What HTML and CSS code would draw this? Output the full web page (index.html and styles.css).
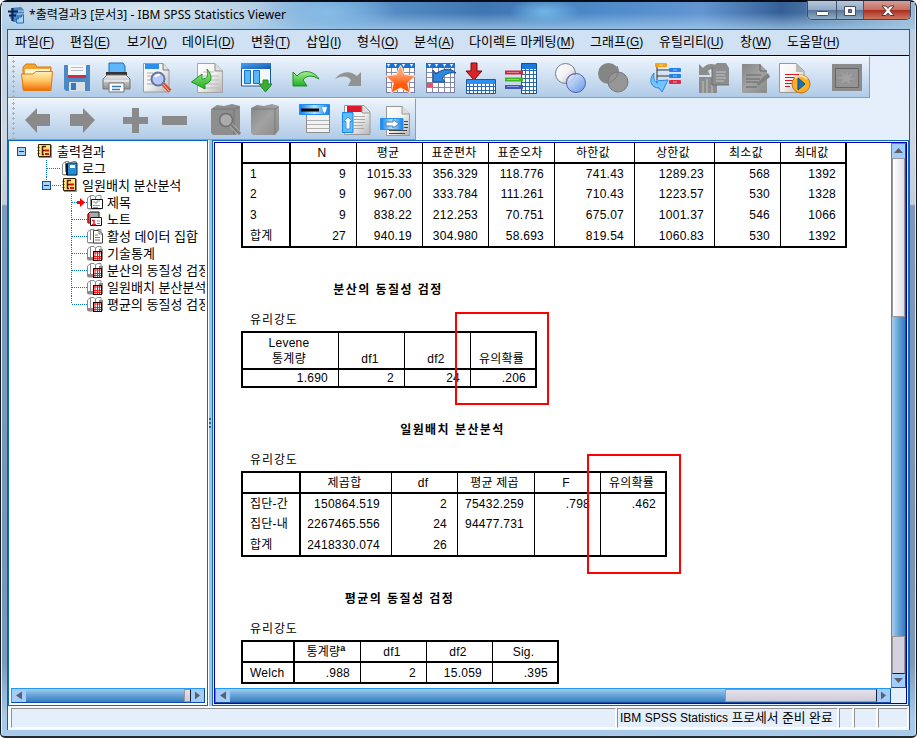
FILE: index.html
```html
<!DOCTYPE html>
<html lang="ko">
<head>
<meta charset="utf-8">
<title>IBM SPSS Statistics Viewer</title>
<link rel="stylesheet" href="styles.css">
</head>
<body>
<svg width="0" height="0" class="defs">
<defs>
<linearGradient id="orange" x1="0" y1="0" x2="0" y2="1"><stop offset="0" stop-color="#fff0c0"/><stop offset=".5" stop-color="#ffc45c"/><stop offset="1" stop-color="#f06a08"/></linearGradient>
<linearGradient id="blue" x1="0" y1="0" x2="1" y2="1"><stop offset="0" stop-color="#4ba3f0"/><stop offset="1" stop-color="#1257b0"/></linearGradient>
<linearGradient id="paper" x1="0" y1="0" x2="1" y2="1"><stop offset="0" stop-color="#fff"/><stop offset=".5" stop-color="#f2f2f2"/><stop offset="1" stop-color="#b4b4b4"/></linearGradient>
<linearGradient id="green" x1="0" y1="0" x2="0" y2="1"><stop offset="0" stop-color="#a6f08a"/><stop offset="1" stop-color="#22ac28"/></linearGradient>
<linearGradient id="gray" x1="0" y1="0" x2="1" y2="1"><stop offset="0" stop-color="#858585"/><stop offset=".5" stop-color="#a2a2a2"/><stop offset="1" stop-color="#8a8a8a"/></linearGradient>
<linearGradient id="lens" x1="0" y1="0" x2="1" y2="1"><stop offset="0" stop-color="#f4f8ff"/><stop offset="1" stop-color="#4f86ee"/></linearGradient>
<linearGradient id="sky" x1="0" y1="0" x2="1" y2="0"><stop offset="0" stop-color="#0c7cf0"/><stop offset=".5" stop-color="#b4e4ff"/><stop offset="1" stop-color="#0c7cf0"/></linearGradient>
<linearGradient id="star" x1="0" y1="0" x2="0" y2="1"><stop offset=".3" stop-color="#ffa070"/><stop offset=".7" stop-color="#ff5a0c"/></linearGradient>
<linearGradient id="steel" x1="0" y1="0" x2="0" y2="1"><stop offset="0" stop-color="#eee"/><stop offset="1" stop-color="#909090"/></linearGradient>
<pattern id="cells" x="2" y="6" width="6" height="5" patternUnits="userSpaceOnUse"><rect width="6" height="5" fill="#fff"/><path d="M5.5 0V5M0 4.5H6" stroke="#858caa"/></pattern>
<pattern id="bcells" x="1" y="1" width="4" height="4" patternUnits="userSpaceOnUse"><rect width="4" height="4" fill="#fff"/><path d="M3.5 0V4M0 3.5H4" stroke="#2868b4"/></pattern>
<g id="logbook"><path d="M.5 1.5H12.5V13.5H.5Z" fill="#ffe27c" stroke="#302408"/><path d="M13.5 2V14.5H1" fill="none" stroke="#8c8c8c"/><path d="M-.5 4.500h2M-.5 7.500h2M-.5 10.500h2" stroke="#302408"/><path d="M4 3.500H8M4.500 3.500V11.500H6M4.500 7.500H7" fill="none" stroke="#5a1800" stroke-width="1.500"/><path d="M7 7.500h4M7 11h4" stroke="#f00808" stroke-width="2"/></g>
<g id="book"><path d="M.5 14.500V4L3.500 1.500H7L8.500 3L10.500 1.500H14V15H2Z" fill="#fff" stroke="#8a8a8a"/><path d="M3.500 2V12M8.500 3V14M1 14.500H7" stroke="#8a8a8a"/></g>
<g id="tablebook"><use href="#book"/><path d="M1 12H6V15H1ZM12 4H16V15H12Z" fill="#8a8a8a"/><rect x="6.500" y="6.500" width="8" height="9" fill="#fff" stroke="#200"/><path d="M7 8h7M8 7v8M7 11.500h7M7 13.500h7M10.500 7v8M12.500 7v8" stroke="#f01818"/></g>
<g id="minus"><rect x=".5" y=".5" width="8" height="8" fill="#a9d3fb" stroke="#0f4ba2"/><path d="M2 4.500h5" stroke="#0f3b80"/></g>
</defs>
</svg>

<div class="window">
<header class="title">
  <svg class="app-icon" width="17" height="18" viewBox="0 0 17 18"><path d="M3 2L13 1L16 4V14L14 16H5L2 12Z" fill="#4b86c0"/><path d="M0 5.500h10M1 9.500h7M4.500 2v13" stroke="#09285c" stroke-width="2"/><path d="M10 5h6M9 8h7" stroke="#bcd9f2"/><path d="M8.500 17V13h2V11h3V9h2v8z" fill="#a9d3f5" stroke="#226fb6"/></svg>
  <h1>*출력결과3 [문서3] - IBM SPSS Statistics Viewer</h1>
  <div class="controls">
    <span><svg width="28" height="19"><rect x="8.500" y="10.500" width="12" height="4" rx="1" fill="#fff" stroke="#46515f"/></svg></span>
    <span><svg width="26" height="19"><path d="M7.500 5.500h11v9h-11zM11.500 8.500v3h3v-3z" fill="#fff" stroke="#46515f" fill-rule="evenodd"/></svg></span>
    <span class="close"><svg width="46" height="19"><path d="M18 5h4l2 2.500L26 5h4l-4 4.500 4 5h-4l-2-2.500-2 2.500h-4l4-5z" fill="#fff" stroke="#5c3438"/></svg></span>
  </div>
</header>

<main class="client">
<nav class="menu"><span>파일<i>(<u>F</u>)</i></span><span>편집<i>(<u>E</u>)</i></span><span>보기<i>(<u>V</u>)</i></span><span>데이터<i>(<u>D</u>)</i></span><span>변환<i>(<u>T</u>)</i></span><span>삽입<i>(<u>I</u>)</i></span><span>형식<i>(<u>O</u>)</i></span><span>분석<i>(<u>A</u>)</i></span><span>다이렉트 마케팅<i>(<u>M</u>)</i></span><span>그래프<i>(<u>G</u>)</i></span><span>유틸리티<i>(<u>U</u>)</i></span><span>창<i>(<u>W</u>)</i></span><span>도움말<i>(<u>H</u>)</i></span></nav>

<div class="toolbar primary">
<svg viewBox="0 0 32 32"><path d="M2 27V5L5 2H14L16 5H30V25Z" fill="#f8a42c" stroke="#dc7a10"/><path d="M4 10V7H29V14H4Z" fill="#fff4d4"/><path d="M.5 12H12L15 9.500H31.500L30 28.500H2.500Z" fill="url(#orange)" stroke="#dd7a10"/></svg>
<svg viewBox="0 0 32 32"><path d="M3 3H29V29H5L3 27Z" fill="#4a88c6"/><path d="M7 3H25V16H7Z" fill="#f5f8fa"/><path d="M10 5.500H22M10 8.500H22" stroke="#b4bcc4"/><path d="M7 14.500H25" stroke="#d82848" stroke-width="3"/><path d="M8 20H24V29H8Z" fill="#d8e0e6"/><path d="M10 21H15V28H10Z" fill="#3679bc"/></svg>
<svg viewBox="0 0 32 32"><path d="M9 12V1H23L25 4V12Z" fill="#5eb7fb" stroke="#1b6bc0"/><path d="M6 10H27V17H6Z" fill="#333"/><path d="M3 17L7 13H26L30 17V27H3Z" fill="url(#steel)" stroke="#777"/><path d="M4 19H29" stroke="#fff"/><path d="M9 21H24V30H9Z" fill="#fff" stroke="#6d747c"/><path d="M12 24.500H21M12 27.500H20" stroke="#3c78aa" stroke-width="1.500"/></svg>
<svg viewBox="0 0 32 32"><path d="M2.500 1.500H22L28 8V30H2.500Z" fill="url(#paper)" stroke="#969da4"/><path d="M4 2H18V7H4Z" fill="#2c8fee"/><path d="M22 1.500V8H28" fill="#e4e4e4" stroke="#777"/><path d="M6 11H12M6 14H11M6 18H11M6 22H15" stroke="#aaa"/><path d="M22 22L29 29" stroke="#df4a28" stroke-width="4"/><path d="M22 22L28 29" stroke="#fdc1a6"/><circle cx="17" cy="17" r="6.500" fill="#b4cafc" stroke="#67749e" stroke-width="2"/><path d="M14 15Q16 12 19 13" stroke="#fff" stroke-width="2" fill="none"/></svg>
<svg viewBox="0 0 32 32"><path d="M6.500 1.500H24L31.500 9V30.500H6.500Z" fill="url(#paper)" stroke="#a4a4a4"/><path d="M24 1.500V9H31.500" fill="#ddd" stroke="#8d8d8d"/><path d="M12 10H23M12 14H28M12 18H28M12 22H28M12 26H28" stroke="#bbb"/><path d="M16 7C23 15 20 21 14 22V27L.5 20L11 12V17C16 17 18 14 16 7Z" fill="url(#green)" stroke="#21952a"/></svg>
<svg viewBox="0 0 32 32"><path d="M1.500 1.500H30.500V24H1.500Z" fill="#f4f8fd" stroke="#1c579c"/><path d="M1 1H31V7H1Z" fill="url(#blue)"/><path d="M4.500 8.500H10.500V21.500H4.500ZM13.500 8.500H19.500V21.500H13.500Z" fill="#58b6fc" stroke="#176fc4"/><path d="M23 18H28V22H32L25.500 30L19 22H23Z" fill="#3dac35" stroke="#188d22"/></svg>
<svg viewBox="0 0 32 32"><path d="M4 10L8 14C15 6 26 10 30 17C23 13 18 13 14 18L18 24H4Z" fill="url(#green)" stroke="#1b8c28"/></svg>
<svg viewBox="0 0 32 32"><path d="M29 10L25 14C18 8 9 9 3 17C9 14 15 13 19 18L16 24H29Z" fill="#929292"/></svg>
<svg viewBox="0 0 32 32"><path d="M2 1H31V31H2Z" fill="#7a80a4"/><path d="M2 1H31V6H2Z" fill="#1971d6"/><path d="M3 2h3l-1.500 3zM10 2h3l-1.500 3zM18 2h3l-1.500 3zM26 2h3l-1.500 3z" fill="#fff"/><path d="M3 6H30V30H3Z" fill="url(#cells)"/><path d="M16.500 3L20.500 12.500L31 14L23.500 21L26 31L16.500 26L7 31L9.500 21L2 14L12.500 12.500Z" fill="url(#star)" stroke="#ffd9c4" stroke-width="1"/></svg>
<svg viewBox="0 0 32 32"><path d="M1 1H30V31H1Z" fill="#7a80a4"/><path d="M1 1H30V6H1Z" fill="#1971d6"/><path d="M3 2h3l-1.500 3zM10 2h3l-1.500 3zM18 2h3l-1.500 3zM25 2h3l-1.500 3z" fill="#fff"/><path d="M2 6H29V30H2Z" fill="url(#cells)"/><path d="M2 21H8V25H2Z" fill="#ee4e61"/><path d="M8 8L11 12C17 7 25 5 31 11C24 10 20 12 17 16L20 20H8Z" fill="#2e86de" stroke="#154d94"/></svg>
<svg viewBox="0 0 32 32"><path d="M6 1H12V9H17L9 18L1 9H6Z" fill="#d92525" stroke="#780a11"/><path d="M1.500 17.500H30.500V31.500H1.500Z" fill="url(#bcells)" stroke="#1b58a0"/><path d="M2 18H30V22H2Z" fill="#2b90f1"/></svg>
<svg viewBox="0 0 32 32"><path d="M16.500 1.500H31.500V31.500H16.500Z" fill="url(#bcells)" stroke="#135095"/><path d="M17 2H31V7H17Z" fill="#1b79dc"/><path d="M0 10.500H18" stroke="#cf2840" stroke-width="4"/><path d="M0 17.500H18" stroke="#43b51d" stroke-width="4"/><path d="M0 25H18" stroke="#4455bf" stroke-width="4"/><path d="M2 10.500h12M2 17.500h12M2 24.500h12" stroke="#fff" opacity=".4"/></svg>
<svg viewBox="0 0 32 32"><circle cx="11.500" cy="11.500" r="10" fill="url(#paper)" stroke="#737b95"/><circle cx="22" cy="21" r="9.500" fill="url(#lens)" opacity=".8" stroke="#334b91"/><path d="M12 21C13 14 16 12 22 12" stroke="#6e7ab0" fill="none"/></svg>
<svg viewBox="0 0 32 32"><circle cx="11.500" cy="11.500" r="10.500" fill="#858585"/><circle cx="21" cy="20" r="10" fill="#969696" stroke="#797979"/><path d="M20 4C23 10 21 16 12 21" fill="none" stroke="#797979"/></svg>
<svg viewBox="0 0 32 32"><path d="M8 4V18M8 8H20M8 14H20" stroke="#333" fill="none"/><rect x="6" y="1" width="12" height="4" rx="1" fill="#f7a01a"/><rect x="20" y="6" width="12" height="4" rx="1" fill="#2480ed"/><rect x="20" y="12" width="12" height="4" rx="1" fill="#2480ed"/><rect x="20" y="18" width="12" height="4" rx="1" fill="#d82c46"/><path d="M5 11C-1 18 2 26 10 26L13 30L19 18L7 19L9 21C6 21 4 17 5 11Z" fill="#76c4ff" stroke="#2886db"/><path d="M10 3h4M24 8h4M24 14h4M24 20h4" stroke="#fff" opacity=".5"/></svg>
<svg viewBox="0 0 32 32"><path d="M1 2L5 6Q10 0 18 3V9L13 7L10 9L12 13H1ZM1 15H19V31H1ZM14 5L19 1H28L31 6V23H14Z" fill="#8d8d8d"/><path d="M18 10H28M18 13H27M18 16H28M18 19H26M5 19V31M9 17V31M14 23V31" stroke="#c0c3c6"/><path d="M14 5V23H31" fill="none" stroke="#717171"/></svg>
<svg viewBox="0 0 32 32"><path d="M2 2H20L27 9V31H2Z" fill="url(#gray)"/><path d="M20 2V9H27M6 13H21M6 17H20M6 20H18M6 25H17" stroke="#666" fill="none"/><path d="M17 21L28 11L30 15L18 24Z" fill="#808080"/></svg>
<svg viewBox="0 0 32 32"><path d="M.5 1.500H17L25 9V30.500H.5Z" fill="url(#paper)" stroke="#999"/><path d="M17 1V10H25Z" fill="#bbb"/><path d="M6 12.500H20M6 15.500H16M6 18.500H15M6 21.500H14M6 24.500H11" stroke="#dc1320"/><circle cx="22" cy="22" r="9" fill="#fcae27" stroke="#bf721c"/><path d="M16 16Q22 11 28 17" stroke="#ffe19b" stroke-width="2" fill="none"/><path d="M19 16L26 22L19 28Z" fill="#1672bc" stroke="#104c75"/></svg>
<svg viewBox="0 0 32 32"><path d="M1 2H31V29H1Z" fill="#8b8b8b"/><path d="M4.500 6.500H27.500V25.500H4.500Z" fill="#949494" stroke="#666"/><path d="M16 8L17 14L22 11L19 16L25 17L18 18L20 23L15 19L10 22L12 17L6 16L13 14L10 10L15 13Z" fill="#a2a2a2"/></svg>
</div>

<div class="toolbar secondary">
<svg viewBox="0 0 32 32"><path d="M4 16L16 4V10H29V22H16V29Z" fill="#8a8a8a"/></svg>
<svg viewBox="0 0 32 32"><path d="M29 16L17 4V10H4V22H17V29Z" fill="#8a8a8a"/></svg>
<svg viewBox="0 0 32 32"><path d="M13 4H20V13H29V20H20V29H13V20H4V13H13Z" fill="#8a8a8a"/></svg>
<svg viewBox="0 0 32 32"><path d="M4 12H29V21H4Z" fill="#8a8a8a"/></svg>
<svg viewBox="0 0 32 32"><path d="M1 5L7 1L14 2L22 0L30 2V28L26 31H3L1 29Z" fill="#8e8e8e"/><path d="M3 5H24V30M25 5L29 3" fill="none" stroke="#747474"/><circle cx="16" cy="16" r="6.500" fill="#aaa" stroke="#707070" stroke-width="1.500"/><path d="M21 21L30 30" stroke="#b3b3b3" stroke-width="4"/><path d="M21 21L30 30" stroke="#7c7c7c" stroke-width="2.500"/></svg>
<svg viewBox="0 0 32 32"><path d="M2 4L8 1L15 2L23 0L30 2V26L26 31H4L2 29Z" fill="url(#gray)"/><path d="M4 5H26V30M26 5L29 3" fill="none" stroke="#797979"/></svg>
<svg viewBox="0 0 32 32"><path d="M7.500 6.500H30.500V28.500H7.500Z" fill="#f3f3f3" stroke="#8c8c8c"/><path d="M8 16.500H30M8 20.500H30M8 24.500H30" stroke="#b0b0b0"/><path d="M.5.5H30.500V10.500H.5Z" fill="url(#sky)" stroke="#238ced"/><path d="M2 6H20" stroke="#050505" stroke-width="3"/><path d="M23 3H28L27 7L25.500 9L24 7Z" fill="#fff"/></svg>
<svg viewBox="0 0 32 32"><path d="M4.500 1.500H24L30 8V30.500H4.500Z" fill="url(#paper)" stroke="#999"/><path d="M7 2H22V8H7Z" fill="#df1728"/><path d="M22 1V9H30" fill="#ddd" stroke="#999"/><path d="M14 12.500H25M14 15.500H25M14 18.500H25M14 21.500H23M14 24.500H24" stroke="#aaa"/><path d="M2.500 8.500H13V28.500H2.500Z" fill="#5dbdff" stroke="#1386f0"/><path d="M3.500 17.500L8 13L12 17.500H10V25H6V17.500Z" fill="#fff" stroke="#4c93cc"/></svg>
<svg viewBox="0 0 32 32"><path d="M7.500 2.500H23L30.500 10V31.500H7.500Z" fill="url(#paper)" stroke="#999"/><path d="M23 2V10H31" fill="#ddd" stroke="#999"/><path d="M10 26.500H28M10 29.500H26M25 17.500H29M25 20.500H29M25 23.500H29" stroke="#444"/><path d="M1.500 14.500H24V25.500H1.500Z" fill="url(#sky)" stroke="#2791ec"/><path d="M7 18H14V15.500L20 20L14 24V22H7Z" fill="#fff" stroke="#4c80a8"/></svg>
</div>

<section class="workspace">
<aside class="outline">
<ul class="tree">
<li><svg width="48" height="17"><use href="#minus" x="8" y="4"/><use href="#logbook" x="29" y="0"/></svg>출력결과</li>
<li><svg width="73" height="17"><path class="dot" d="M37.500 0V17M38 8.500H52"/><g transform="translate(53 0)"><use href="#book"/><path d="M4 4L6 3H15V15H5Z" fill="#218fd3" stroke="#102f4b"/><path d="M8 5H13V8H8Z" fill="#fff"/><path d="M5 4V15" stroke="#111" stroke-width="2"/></g></svg>로그</li>
<li><svg width="73" height="17"><path class="dot" d="M37.500 0V4M43 8.500H53"/><use href="#minus" x="33" y="4"/><use href="#logbook" x="54" y="0"/></svg>일원배치 분산분석</li>
<li><svg width="98" height="17"><path class="dot" d="M62.500 0V17M63 8.500H78"/><path d="M68 7h3V4l5 4.500-5 4.500V10h-3z" fill="#f00"/><g transform="translate(78 0)"><use href="#book"/><path d="M4.500 5.500H15.500V14.500H4.500Z" fill="#fff" stroke="#111"/><path d="M6 8h2v1h2V7h3M6 11.500h7M6 13.500h5" fill="none" stroke="#999"/></g></svg>제목</li>
<li><svg width="98" height="17"><path class="dot" d="M62.500 0V17M63 8.500H78"/><g transform="translate(78 0)"><path d="M1 3L3 1H12V12H1Z" fill="#aaa" stroke="#111"/><path d="M1.500 3V12" stroke="#c31019" stroke-width="2"/><path d="M3.500 6.500H14.500V14.500H3.500Z" fill="#fff" stroke="#111"/><path d="M5 9.500H7V13M5 13.500H9" fill="none" stroke="#e01d24" stroke-width="1.400"/><path d="M10 10h3M10 12.500h3" stroke="#888"/></g></svg>노트</li>
<li><svg width="98" height="17"><path class="dot" d="M62.500 0V17M63 8.500H78"/><g transform="translate(78 0)"><use href="#book"/><path d="M6.500 2.500H12L15.500 6V15H6.500Z" fill="#fff" stroke="#444"/><path d="M12 2.500V6H15M8 7h3M8 9.500h5M8 12h5" stroke="#777" fill="none"/></g></svg>활성 데이터 집합</li>
<li><svg width="98" height="17"><path class="dot" d="M62.500 0V17M63 8.500H78"/><use href="#tablebook" x="78" y="0"/></svg>기술통계</li>
<li><svg width="98" height="17"><path class="dot" d="M62.500 0V17M63 8.500H78"/><use href="#tablebook" x="78" y="0"/></svg>분산의 동질성 검정</li>
<li><svg width="98" height="17"><path class="dot" d="M62.500 0V17M63 8.500H78"/><use href="#tablebook" x="78" y="0"/></svg>일원배치 분산분석</li>
<li><svg width="98" height="17"><path class="dot" d="M62.500 0V8M63 8.500H78"/><use href="#tablebook" x="78" y="0"/></svg>평균의 동질성 검정</li>
</ul>
<div class="hscroll"><b><svg width="14" height="13"><path d="M10 2.500V10.500L4 6.500Z" fill="#59616c"/></svg></b><div class="thumb"></div><div class="track"></div><b><svg width="13" height="13"><path d="M4 2.500V10.500L9 6.500Z" fill="#59616c"/></svg></b></div>
</aside>
<div class="splitter"><i></i><i></i><i></i></div>
<section class="viewer">
<div class="viewer-inner">
<article class="document">
<table class="desc">
<colgroup><col><col><col><col><col><col><col><col><col></colgroup>
<tr><th></th><th>N</th><th>평균</th><th>표준편차</th><th>표준오차</th><th>하한값</th><th>상한값</th><th>최소값</th><th>최대값</th></tr>
<tr class="first"><td>1</td><td>9</td><td>1015.33</td><td>356.329</td><td>118.776</td><td>741.43</td><td>1289.23</td><td>568</td><td>1392</td></tr>
<tr><td>2</td><td>9</td><td>967.00</td><td>333.784</td><td>111.261</td><td>710.43</td><td>1223.57</td><td>530</td><td>1328</td></tr>
<tr><td>3</td><td>9</td><td>838.22</td><td>212.253</td><td>70.751</td><td>675.07</td><td>1001.37</td><td>546</td><td>1066</td></tr>
<tr><td>합계</td><td>27</td><td>940.19</td><td>304.980</td><td>58.693</td><td>819.54</td><td>1060.83</td><td>530</td><td>1392</td></tr>
</table>
<section class="levene-block">
<h2>분산의 동질성 검정</h2><h3>유리강도</h3>
<table class="levene">
<colgroup><col><col><col><col></colgroup>
<tr><th>Levene<br>통계량</th><th>df1</th><th>df2</th><th>유의확률</th></tr>
<tr class="first"><td>1.690</td><td>2</td><td>24</td><td>.206</td></tr>
</table>
<div class="mark"></div>
</section>
<section class="anova-block">
<h2>일원배치 분산분석</h2><h3>유리강도</h3>
<table class="anova">
<colgroup><col><col><col><col><col><col></colgroup>
<tr><th></th><th>제곱합</th><th>df</th><th>평균 제곱</th><th>F</th><th>유의확률</th></tr>
<tr class="first"><td>집단-간</td><td>150864.519</td><td>2</td><td>75432.259</td><td>.798</td><td>.462</td></tr>
<tr><td>집단-내</td><td>2267465.556</td><td>24</td><td>94477.731</td><td></td><td></td></tr>
<tr><td>합계</td><td>2418330.074</td><td>26</td><td></td><td></td><td></td></tr>
</table>
<div class="mark"></div>
</section>
<section class="welch-block">
<h2>평균의 동질성 검정</h2><h3>유리강도</h3>
<table class="welch">
<colgroup><col><col><col><col><col></colgroup>
<tr><th></th><th>통계량<sup>a</sup></th><th>df1</th><th>df2</th><th>Sig.</th></tr>
<tr class="first"><td>Welch</td><td>.988</td><td>2</td><td>15.059</td><td>.395</td></tr>
</table>
</section>
</article>
<div class="vscroll"><b><svg width="13" height="14"><path d="M2 9H11L6.500 4Z" fill="#59616c"/></svg></b><div class="lead"></div><div class="thumb"></div><div class="track"></div><b><svg width="13" height="13"><path d="M2 4H11L6.500 9Z" fill="#59616c"/></svg></b></div>
<div class="hscroll"><b><svg width="14" height="13"><path d="M10 2.500V10.500L4 6.500Z" fill="#59616c"/></svg></b><div class="thumb"></div><div class="track"></div><b><svg width="13" height="13"><path d="M4 2.500V10.500L9 6.500Z" fill="#59616c"/></svg></b></div>
<div class="corner"></div>
</div>
</section>
</section>
<footer class="status"><div></div><div>IBM SPSS Statistics <span>프로세서 준비 완료</span></div><div></div><div></div><div></div></footer>
</main>
</div>
</body>
</html>
```
FILE: styles.css
```css
* { box-sizing: border-box; }
body { margin: 0; overflow: hidden; font-family: "Liberation Sans", "Noto Sans CJK KR", sans-serif; color: #000; }
.defs { position: absolute; }
svg { display: block; }
.window {
  width: 917px; height: 738px; padding: 0 6px; display: flex; flex-direction: column;
  border: 1px solid #10161f; border-top: 2px solid #080c18; border-bottom: 2px solid #20282f; border-radius: 7px 7px 5px 5px;
  box-shadow: inset 1px 0 #e4f0fa, inset -1px 0 #d6e9f8, inset 0 -1px #9fd3f0;
  background: linear-gradient(#b4cce2 0, #ced6e2 130px, #c3ced9 202px, #8198ba 204px, #7d94b0 550px, #8098b4 660px, #a8c9e8 715px);
  padding-bottom: 6px;
}
.title {
  height: 27px; flex: none; margin: 0 -5px; display: flex; align-items: flex-start;
  background:
    radial-gradient(ellipse 36px 14px at 543px 10px, #73b7e6, transparent),
    radial-gradient(ellipse 70px 22px at 325px 10px, #88bde7, transparent),
    radial-gradient(ellipse 180px 30px at 140px 8px, rgba(219,233,242,.9), transparent),
    linear-gradient(transparent 40%, rgba(165,205,235,.75)),
    linear-gradient(90deg, #b9cfe3, #a2c1dc 250px, #5f96cd 350px, #3f75b1 480px, #4e8aca 600px, #6395d1 700px, #355f96 780px, #9cb9d2 100%);
}
.app-icon { margin: 4px 4px 0 6px; }
h1 { margin: 3px 0 0; font: 12px/20px "Noto Sans", "Noto Sans CJK KR", sans-serif; letter-spacing: .06px; white-space: nowrap; }
.controls { margin: -1px 4px 0 auto; display: flex; border: 1px solid #334a68; border-top: 0; border-radius: 0 0 5px 5px; overflow: hidden; box-shadow: 0 0 1px #fff; }
.controls span { height: 18px; border-right: 1px solid #44566c; background: linear-gradient(#b7c8dc, #91a9c4 48%, #59779c 52%, #8fabc5); }
.controls .close { border: 0; background: linear-gradient(#d79e96, #c76e60 48%, #aa2f20 52%, #cf7660); }
.client { flex: 1; min-height: 0; border: 1px solid #4a5157; border-bottom: 2px solid #59606a; background: #e4effb; display: flex; flex-direction: column; }
.menu {
  height: 26px; flex: none; border-bottom: 1px solid #000; background: #cfe1f2; padding: 3px 0 0 7px;
  display: grid; grid-template-columns: 55px 57px 55px 69px 55px 51px 57px 55px 121px 69px 81px 47px 60px;
  font: 13px/16px "Noto Sans CJK KR", sans-serif;
}
.menu span { white-space: nowrap; }
.menu i { font: 12px/16px "Liberation Sans", sans-serif; }
.menu u { text-underline-offset: 2px; }
.toolbar { flex: none; height: 42px; display: grid; padding: 5px 0 0 13px; border-right: 1px solid #9b9b9b; border-bottom: 1px solid #9b9b9b; border-top: 1px solid #fbfdff; background: radial-gradient(circle, #a7b3c1 1px, transparent 1.4px) 3px 2px / 5px 5px repeat-y, linear-gradient(#edf4fc, #b0cbe7); }
.toolbar svg { width: 32px; height: 32px; }
.primary { width: 862px; grid-template-columns: 40px 39px 41px 50px 49px 49px 43px 52px 41px 40px 40px 49px 43px 52px 49px 42px 39px 52px 32px; }
.secondary { width: 408px; grid-template-columns: 45px 53px 39px 52px 39px 50px 41px 39px 32px; }
.workspace { height: 566px; flex: none; display: flex; }
.outline { width: 200px; flex: none; border: 1px solid #0d69bb; background: #fff; display: flex; flex-direction: column; padding: 0 2px 2px 0; }
.tree { flex: 1; margin: 0; padding: 2px 0 0; list-style: none; overflow: hidden; font: 13px/15px "Noto Sans CJK KR", sans-serif; }
.tree li { display: flex; height: 17px; white-space: nowrap; }
.tree svg { flex: none; overflow: visible; }
.dot { stroke: #0874d8; stroke-dasharray: 1 1; fill: none; }
.outline .hscroll { margin-left: 2px; }
.splitter { width: 4px; flex: none; background: linear-gradient(90deg, #fff 0 1px, #9ec5ea 1px); display: flex; flex-direction: column; justify-content: center; gap: 2px; align-items: center; }
.splitter i { width: 2px; height: 2px; background: #3c628e; }
.viewer { width: 697px; flex: none; border: 1px solid #0d69bb; padding: 1px; background: #e4effb; }
.viewer-inner { height: 562px; border: 1px solid #0000a8; display: grid; grid-template: 545px 15px / 676px 15px; background: #fff; }
.document { width: 676px; height: 545px; padding: 0 0 0 26px; overflow: hidden; font-size: 12px; }
table { table-layout: fixed; border-collapse: separate; border-spacing: 0; border: 2px solid #000; letter-spacing: .25px; }
th, td { padding: 0 10px 0 0; height: 21px; line-height: 16px; border-right: 1px solid #000; white-space: nowrap; text-align: right; font-weight: 400; overflow: hidden; }
th { padding: 0 3px 0 0; text-align: center; border-bottom: 2px solid #000; vertical-align: bottom; line-height: 18px; }
.first td { height: 19px; }
td:last-child, th:last-child { border-right: 0; }
td:last-child { padding-right: 9px; }
.desc tr > :first-child, .anova tr > :first-child, .welch tr > :first-child { border-right-width: 2px; text-align: left; padding-left: 7px; padding-right: 0; }
.desc { width: 606px; border-top: 0; }
.desc col { width: 66px; }
.desc col:nth-child(1) { width: 48px; }
.desc col:nth-child(6), .desc col:nth-child(7) { width: 80px; }
.desc col:last-child { width: 64px; }
section[class$="-block"] { position: relative; height: 141px; padding-top: 32px; }
section.levene-block { padding-top: 33px; }
section.anova-block { height: 169px; }
h2 { margin: 0; font: bold 12px/18px "Liberation Sans", "Noto Sans CJK KR", sans-serif; letter-spacing: 1.45px; text-align: center; white-space: nowrap; }
h3 { margin: 12px 0 2px 9px; font-size: 12px; line-height: 18px; font-weight: 400; letter-spacing: .9px; }
.levene-block h2 { width: 294px; }
.anova-block h2 { width: 423px; }
.welch-block h2 { width: 317px; }
.levene { width: 296px; }
.levene col { width: 66px; }
.levene col:first-child { width: 96px; }
.levene col:last-child { width: 64px; }
.levene th { height: 37px; line-height: 16px; padding-bottom: 1px; }
.levene .first td { height: 16px; }
.anova { width: 426px; }
.anova col { width: 66px; }
.anova col:nth-child(1) { width: 58px; }
.anova col:nth-child(2) { width: 91px; }
.anova td:nth-child(2) { padding-right: 11px; }
.anova col:nth-child(4) { width: 77px; }
.anova col:last-child { width: 64px; }
.welch { width: 318px; }
.welch col { width: 66px; }
.welch col:first-child { width: 52px; }
.welch col:last-child { width: 64px; }
sup { font-size: 9px; line-height: 0; font-weight: bold; }
.mark { position: absolute; border: 2px solid #f00; width: 94px; }
.levene-block .mark { left: 214px; top: 64px; height: 93px; }
.anova-block .mark { left: 346px; top: 65px; height: 120px; }
.hscroll, .vscroll { display: flex; border: 1px solid #2597f5; }
.hscroll { height: 15px; border-bottom-color: #084faa; border-right-color: #084f91; }
.hscroll b { flex: none; background: #a4ccfa; }
.hscroll .thumb { flex: 1; background: linear-gradient(#abcdec, #68a6da 45%, #387bbe); }
.hscroll .track { width: 7px; background: linear-gradient(#e4e1eb, #cfccd8); border: 1px solid #999; border-right: 1px solid #17212f; }
.viewer .hscroll .track { width: 152px; }
.vscroll { flex-direction: column; width: 15px; border-bottom-color: #0b55ac; border-right-color: #0b55ac; }
.vscroll b { flex: none; background: #a4ccfa; }
.vscroll .lead { height: 159px; border: 1px solid #9a9a9a; background: linear-gradient(90deg, #fff, #e0e0e8); }
.vscroll .thumb { flex: 1; background: linear-gradient(90deg, #abcdec, #68a6da 45%, #387bbe); }
.vscroll .track { height: 38px; border: 1px solid #999; border-bottom-color: #102040; background: #d5d2df; }
.corner { background: #e4effb; }
.status { flex: 1; display: flex; padding: 2px 1px 2px 3px; gap: 1px; background: #f5fafe; font: 12px/18px "Liberation Sans", "Noto Sans CJK KR", sans-serif; }
.status div { border: 1px solid #929292; border-right-color: #fff; border-bottom-color: #fff; background: #e4effb; white-space: nowrap; }
.status span { font-size: 12.8px; line-height: 16px; }
.status div:nth-child(1) { flex: 1; }
.status div:nth-child(2) { width: 221px; padding-left: 2px; }
.status div:nth-child(3) { width: 14px; }
.status div:nth-child(4) { width: 23px; }
.status div:nth-child(5) { width: 30px; }
```
